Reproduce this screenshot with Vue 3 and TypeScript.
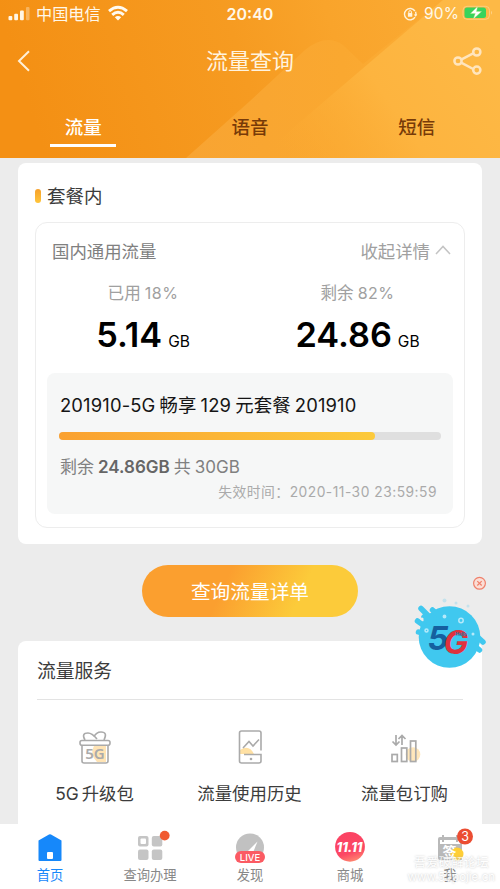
<script setup lang="ts">
import { ref } from 'vue'

interface UsageTab { label: string }

const tabs: UsageTab[] = [{ label: '流量' }, { label: '语音' }, { label: '短信' }]
const activeTab = ref<number>(0)
const usedShare = 82.8
</script>

<template>
  <div class="screen">
    <header class="header">
      <svg class="header-bg" viewBox="0 0 500 158" preserveAspectRatio="none">
        <defs>
          <linearGradient id="hb" x1="0" y1="0.1" x2="1" y2="0"><stop offset="0" stop-color="#f49014" /><stop offset=".45" stop-color="#f69b21" /><stop offset=".65" stop-color="#f9a42b" /><stop offset="1" stop-color="#fbae38" /></linearGradient>
          <linearGradient id="hs" x1="0" y1="0" x2="1" y2="0"><stop offset="0" stop-color="#f8a432" /><stop offset=".5" stop-color="#faa830" /><stop offset="1" stop-color="#fcb03a" /></linearGradient>
          <linearGradient id="hc" gradientUnits="userSpaceOnUse" x1="280" y1="158" x2="480" y2="20"><stop offset="0" stop-color="#fba930" stop-opacity="0" /><stop offset=".5" stop-color="#fdb43f" /><stop offset="1" stop-color="#fdb946" /></linearGradient>
        </defs>
        <rect width="500" height="158" fill="url(#hb)" />
        <path d="M186 158 250 101 305 50Q326 33 343 45L363 64 443 0H500V158Z" fill="url(#hs)" />
        <path d="M300 122 443 0H500V158H258Z" fill="url(#hc)" />
      </svg>
      <div class="status">
        <div class="carrier">
          <svg width="23" height="15" viewBox="0 0 23 15" fill="#fff6e6"><rect x=".5" y="10" width="3.8" height="4.3" rx="1" /><rect x="6.2" y="7.8" width="3.8" height="6.5" rx="1" /><rect x="12" y="4.5" width="3.8" height="9.8" rx="1" /><rect x="18" y="1" width="3.5" height="13.3" rx="1" opacity=".35" /></svg>
          <span class="carrier-name">中国电信</span>
          <svg width="20" height="15" viewBox="0 0 20 15" fill="none" stroke="#fffaf0" stroke-width="2.9"><path d="M1 5.2Q10-2.500 19 5.200M4.200 8.900Q10 3.800 15.800 8.900" /><path d="M10 14.4 6.800 11.300Q10 8.600 13.200 11.300Z" fill="#fffaf0" stroke="none" /></svg>
        </div>
        <div class="clock">20:40</div>
        <div class="power">
          <svg width="15" height="14" viewBox="0 0 15 14" fill="none" stroke="#fff3dc" stroke-width="1.4"><path d="M11.9 4A5.7 5.7 0 1 0 12 10.2M12.6 4.8Q13.4 7 12.5 9" /><path d="m10.8 7.4 1.8 2.3 1.7-2.5Z" fill="#fff3dc" stroke="none" /><path d="M5.8 6V4.9a1.3 1.3 0 0 1 2.6 0V6" stroke-width="1" /><rect x="4.9" y="6" width="4.4" height="3.8" rx=".6" fill="#fff3dc" stroke="none" /></svg>
          <span class="percent">90%</span>
          <svg width="31" height="15" viewBox="0 0 31 15"><rect x="1" y=".3" width="26.5" height="13" rx="4" fill="none" stroke="#ffe2b4" stroke-opacity=".5" /><path d="M29 4.800q2 2 0 4" fill="#ffe2b4" opacity=".6" /><rect x="2.500" y="1.500" width="21.500" height="10.600" rx="2.500" fill="#39d35c" /><path d="M15.500 .5 8.500 7.500h4.800l-2 5.500L19.500 5.500h-5Z" fill="#fff" stroke="#b8e480" stroke-width=".4" /></svg>
        </div>
      </div>
      <nav class="navbar">
        <svg class="back" width="14" height="22" viewBox="0 0 14 22" fill="none" stroke="#fff0d8" stroke-width="2"><path d="M12 1.2 2 11 12 20.8" /></svg>
        <h1>流量查询</h1>
        <svg class="share" width="30" height="28" viewBox="0 0 30 28" fill="none" stroke="#ffe5bd" stroke-width="2.5"><path d="m8.600 12.300 11.600-6M8.600 15.800 20.200 22" /><circle cx="5" cy="14" r="3.600" /><circle cx="23.800" cy="5" r="3.600" /><circle cx="23.800" cy="23.100" r="3.600" /></svg>
      </nav>
      <div class="tabs">
        <button v-for="(tab, i) in tabs" :key="tab.label" class="tab" :class="{ active: i === activeTab }" @click="activeTab = i">{{ tab.label }}</button>
      </div>
    </header>

    <main class="content">
      <section class="card package">
        <div class="section-head"><i class="marker"></i><h2>套餐内</h2></div>
        <div class="summary">
          <div class="summary-head">
            <span class="kind">国内通用流量</span>
            <span class="collapse">收起详情<svg width="16" height="10" viewBox="0 0 16 10" fill="none" stroke="#c4c4c4" stroke-width="1.5"><path d="m1 9 7-7.600L15 9" /></svg></span>
          </div>
          <div class="figures">
            <div class="figure">
              <div class="caption">已用<b>18%</b></div>
              <div class="amount">5.14<small>GB</small></div>
            </div>
            <div class="figure rest">
              <div class="caption">剩余<b>82%</b></div>
              <div class="amount">24.86<small>GB</small></div>
            </div>
          </div>
          <div class="plan">
            <h3><span>201910-5G</span><span>畅享</span><span>129</span><span>元套餐</span><span>201910</span></h3>
            <div class="track"><div class="fill" :style="{ width: usedShare + '%' }"></div></div>
            <div class="remaining"><span>剩余</span><strong>24.86GB</strong><span>共</span><span>30GB</span></div>
            <div class="expiry"><span>失效时间：</span><span>2020-11-30 23:59:59</span></div>
          </div>
        </div>
      </section>

      <button class="detail-button">查询流量详单</button>

      <section class="card services">
        <h2>流量服务</h2>
        <div class="service-grid">
          <div class="service">
            <svg width="34" height="36" viewBox="0 0 34 36" fill="none" stroke="#aaa" stroke-width="1.6"><path d="M16 17h12v16H19Q11 25 16 17Z" fill="#ffe4b5" stroke="none" /><rect x="2" y="11.500" width="30" height="4.800" rx="2" /><path d="M4 16.300V32q0 2 2 2h22q2 0 2-2V16.300M7 11Q3 4 10 4q4 0 9 6M16 8q2-5 7-5 7 0 3 8" /><text x="17" y="30" text-anchor="middle" class="gift-text">5G</text></svg>
            <span><em>5G</em>升级包</span>
          </div>
          <div class="service">
            <svg width="34" height="36" viewBox="0 0 34 36" fill="none" stroke="#aaa" stroke-width="1.6"><path d="M7 25V21q9-6 14 4Z" fill="#ffe1a4" stroke="none" /><path d="M28 21.500V4q0-2-2-2H8.500q-2 0-2 2v28q0 2 2 2H26q2 0 2-2v-6.500H11" /><path d="m10 19 6-6.500 4 4.500 6-6.500" /><circle cx="18" cy="30" r="1.300" fill="#aaa" stroke="none" /></svg>
            <span>流量使用历史</span>
          </div>
          <div class="service">
            <svg width="34" height="36" viewBox="0 0 34 36" fill="none" stroke="#aaa" stroke-width="1.700"><circle cx="25" cy="25.500" r="7.300" fill="#ffe7bb" stroke="none" /><rect x="4" y="25.500" width="5.300" height="7" /><rect x="13.500" y="19" width="5.300" height="13.500" /><rect x="22.500" y="12" width="5.300" height="20.500" /><path d="M8 6v10M4.500 12.500 8 16l3.500-3.500M14 16V7M10.500 10 14 6.500l3.500 3.500" /></svg>
            <span>流量包订购</span>
          </div>
        </div>
      </section>
    </main>

    <nav class="tabbar">
      <div class="item current">
        <svg width="36" height="32" viewBox="0 0 36 32"><path d="M6.500 8.500 17 2.500q1-.6 2 0l10.500 6V28q0 1-1 1h-21q-1 0-1-1Z" fill="#1688fa" /><rect x="15" y="20" width="6" height="7" rx="1" fill="#fff" /></svg>
        <span>首页</span>
      </div>
      <div class="item">
        <svg width="48" height="32" viewBox="0 0 48 32"><g fill="#c5c5c5"><rect x="12" y="4" width="10.500" height="10.500" rx="2" /><rect x="25.800" y="4" width="10.500" height="10.500" rx="2" /><rect x="12" y="17.600" width="10.500" height="10.500" rx="2" /><rect x="25.800" y="17.600" width="10.500" height="10.500" rx="2" /></g><rect x="14.500" y="6.500" width="5.500" height="5.500" rx="1" fill="#fff" /><circle cx="38.700" cy="3.600" r="4.900" fill="#f05a31" /></svg>
        <span>查询办理</span>
      </div>
      <div class="item">
        <svg width="36" height="32" viewBox="0 0 36 32"><circle cx="18" cy="15.500" r="14" fill="#c1c1c1" /><path d="m25.500 9.500-11 11h6.500Z" fill="#fff" /><rect x="3" y="19" width="30" height="12" rx="6" fill="#fb5b63" /><text x="18" y="28.500" text-anchor="middle" class="live-text">LIVE</text></svg>
        <span>发现</span>
      </div>
      <div class="item">
        <svg width="36" height="32" viewBox="0 0 36 32"><defs><linearGradient id="sale" x1=".3" y1="0" x2=".6" y2="1"><stop offset="0" stop-color="#fb4263" /><stop offset=".7" stop-color="#fc4864" /><stop offset="1" stop-color="#ff8770" /></linearGradient></defs><circle cx="18" cy="14.800" r="14.900" fill="url(#sale)" /><text x="17.500" y="20" text-anchor="middle" class="sale-text">11.11</text></svg>
        <span>商城</span>
      </div>
      <div class="item">
        <svg width="48" height="32" viewBox="0 0 48 32"><path d="M12 7q0-2 2-2h20q2 0 2 2v21H14q-2 0-2-2Z" fill="#b9b9b9" /><path d="M14 8h20v4H14Z" fill="#fff" /><path d="M17 3v7M31 3v7" stroke="#b9b9b9" stroke-width="2" /><circle cx="31" cy="22" r="6.500" fill="#ffce35" /><text x="23.500" y="25" text-anchor="middle" class="sign-text">签</text><circle cx="39" cy="4.500" r="8" fill="#eb4d32" /><text x="39" y="8.700" text-anchor="middle" class="badge-text">3</text></svg>
        <span>我</span>
      </div>
      <div class="watermark"><span>吾爱破解论坛</span><span>www.52pojie.cn</span></div>
    </nav>

    <aside class="promo">
      <svg width="80" height="106" viewBox="0 0 80 106">
        <g fill="none" stroke="#ef806b" stroke-width="1.200"><circle cx="69.500" cy="13.300" r="5.900" fill="#fbded6" /><path d="m67.300 11.100 4.400 4.400m0-4.400-4.400 4.400" /></g>
        <g fill="#40c8ef"><circle cx="39.500" cy="67" r="30.800" /></g>
        <g fill="none" stroke="#40c8ef" stroke-width="5.500" stroke-linecap="round"><path d="m7.500 51 7 5M8.500 62l6 2M11 38.500l13 13M22.500 40l7 6M14 47l12 10" /><path d="m60 72 9.500 8M62 62l11 10" /></g>
        <circle cx="12" cy="49" r="1.600" fill="#ececec" />
        <g fill="none" stroke="#b4e9fa" stroke-width="1.500"><circle cx="51" cy="50.500" r="2.200" /><circle cx="16.500" cy="60.500" r="1.500" /><circle cx="34.500" cy="46.500" r="1.200" fill="#b4e9fa" /></g>
        <circle cx="63" cy="64" r="1.500" fill="#b4e9fa" /><g fill="#c5e2ec"><circle cx="34.500" cy="30.500" r="2" /><circle cx="46" cy="33" r="1.500" /><circle cx="58" cy="36" r="1.500" /></g>
        <text x="17.500" y="80" class="promo-five">5</text><text x="33.500" y="84" class="promo-g">G</text><text x="45.500" y="66" class="promo-hello">Hello</text>
      </svg>
    </aside>
  </div>
</template>

<style>
body { margin: 0; overflow: hidden; }
</style>

<style scoped>
* { box-sizing: border-box; }
.screen { position: relative; width: 500px; height: 889px; overflow: hidden; display: flex; flex-direction: column; background: #ececec; font-family: Inter, "Noto Sans CJK SC", sans-serif; color: #3c3c3c; }
h1, h2, h3 { margin: 0; font-weight: 400; }
button { border: 0; padding: 0; background: none; font-family: inherit; }
svg { display: block; flex: none; overflow: visible; }
span, em, b { white-space: nowrap; }
.header { position: relative; height: 158px; flex: none; display: flex; flex-direction: column; }
.header-bg { position: absolute; inset: 0; width: 500px; height: 158px; }
.status { position: relative; height: 27px; display: grid; grid-template-columns: 1fr auto 1fr; align-items: center; padding: 0 8px; color: #fff8ea; }
.carrier { display: flex; align-items: center; }
.carrier-name { margin: 0 7px 0 5px; font-size: 16.200px; line-height: 26px; }
.clock { font-size: 16px; font-weight: 600; letter-spacing: 0; }
.power { display: flex; align-items: center; justify-content: flex-end; }
.percent { margin: 0 3px 0 6px; font-size: 15.500px; letter-spacing: .1px; }
.power > svg:last-child { margin-right: -1px; }
.navbar { position: relative; height: 67px; display: flex; align-items: center; justify-content: space-between; padding: 0 17px; color: #fff3df; }
.back { margin-right: 16px; }
h1 { font-size: 22px; line-height: 32px; }
.tabs { position: relative; height: 64px; display: grid; grid-template-columns: repeat(3, 1fr); justify-items: center; align-items: start; }
.tab { width: 66px; height: 53px; padding-top: 14px; font-size: 18.500px; line-height: 38px; font-weight: 500; color: #773a08; border-bottom: 3px solid transparent; }
.tab.active { color: #fff; border-color: #fff; font-weight: 500; }
.content { flex: none; padding: 5px 18px 0; display: flex; flex-direction: column; align-items: center; height: 666px; }
.card { width: 464px; background: #fff; border-radius: 8px; }
.package { height: 381px; padding: 17px 17px 0; flex: none; }
.section-head { display: flex; align-items: center; height: 32px; gap: 6px; }
.marker { width: 6px; height: 14px; border-radius: 3px; background: linear-gradient(#f6a12c, #ffc53a); }
.section-head h2 { font-size: 18.500px; line-height: 30px; }
.summary { margin-top: 10px; height: 306px; border: 1px solid #ededed; border-radius: 12px; padding: 12px 11px 0; }
.summary-head { display: flex; justify-content: space-between; align-items: center; height: 30px; padding: 0 2px 0 5px; font-size: 17.400px; }
.kind { color: #808080; }
.collapse { display: flex; align-items: center; gap: 5px; color: #a0a0a0; }
.figures { display: grid; grid-template-columns: 192px 1fr; height: 108px; padding-top: 15px; }
.figure { text-align: center; }
.rest { padding-left: 23px; }
.caption { height: 26px; line-height: 26px; font-size: 16.600px; color: #a0a0a0; }
.caption b { margin-left: 4px; font-weight: 400; font-size: 16px; letter-spacing: .5px; }
.amount { height: 52px; line-height: 58px; font-size: 34.300px; font-weight: 600; color: #000; }
.amount small { margin-left: 6px; font-size: 15.500px; font-weight: 400; }
.plan { height: 141px; border-radius: 8px; background: #f6f7f7; padding: 17px 12px 0; }
.plan h3 { display: flex; gap: 4px; height: 30px; line-height: 30px; padding-left: 1px; font-size: 18.400px; letter-spacing: .15px; color: #151515; }
.track { height: 8px; margin-top: 12px; background: #dfdfdf; border-radius: 4px; }
.fill { height: 8px; border-radius: 4px; background: linear-gradient(90deg, #faa131, #fcca3b); }
.remaining { display: flex; gap: 4px; height: 28px; margin-top: 13px; line-height: 28px; font-size: 17px; padding-left: 1px; color: #808080; }
.remaining strong { font-weight: 600; color: #666; }
.expiry { display: flex; justify-content: flex-end; height: 22px; line-height: 22px; font-size: 13.800px; color: #aaa; padding-right: 4px; letter-spacing: .5px; }
.detail-button { width: 216px; height: 52px; margin: 21px 0 24px; flex: none; border-radius: 26px; color: #fff; font-size: 19.700px; line-height: 54px; background: linear-gradient(115deg, #fb9f2f 38%, #fccb3a 72%); }
.services { height: 183px; border-radius: 8px 8px 0 0; padding: 0 19px; flex: none; }
.services h2 { height: 59px; line-height: 61px; font-size: 18.800px; border-bottom: 1px solid #e3e3e3; }
.service-grid { display: grid; grid-template-columns: repeat(3, 155px); margin: 29px -19px 0 -20px; }
.service { display: flex; flex-direction: column; align-items: center; gap: 15px; font-size: 17.400px; line-height: 28px; }
.service em { font-style: normal; margin-right: 3px; }
.gift-text { font: 600 15px "Noto Sans"; fill: #aaa; stroke: none; }
.tabbar { position: relative; height: 65px; flex: none; display: grid; grid-template-columns: repeat(5, 1fr); background: #fff; }
.item { display: flex; flex-direction: column; align-items: center; padding-top: 8px; color: #888; font-size: 13.300px; line-height: 22px; }
.item.current { color: #1688fa; }
.live-text { font: 500 9.500px Inter; fill: #fff; }
.sale-text { font: italic 800 12.800px Inter; fill: #fff; }
.sign-text { font: 700 14px "Noto Sans CJK SC"; fill: #fff; }
.badge-text { font: 12.500px Inter; fill: #fff; }
.watermark { position: absolute; right: 5px; bottom: 5px; display: flex; flex-direction: column; align-items: center; font-size: 12.500px; line-height: 14px; color: #fff; text-shadow: 0 0 2px #aaa; opacity: .75; }
.watermark span:last-child { font-size: 11.500px; }
.promo { position: absolute; left: 410px; top: 570px; }
.promo-five { font: italic 700 33px Inter; fill: #15609f; }
.promo-g { font: italic 700 33px Inter; fill: #df323e; }
.promo-hello { font: 700 4.500px Inter; fill: #2184b5; }
</style>
